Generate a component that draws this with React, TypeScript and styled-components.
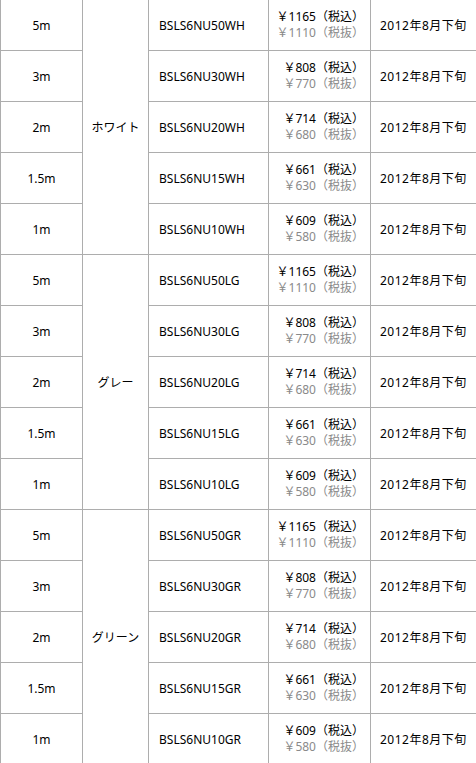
import React from 'react';
import { createGlobalStyle, styled } from 'styled-components';

// =============================================================================
// Data
// =============================================================================

const LENGTHS = [
  { label: '5m', code: '50', tax: 1165, net: 1110 },
  { label: '3m', code: '30', tax: 808, net: 770 },
  { label: '2m', code: '20', tax: 714, net: 680 },
  { label: '1.5m', code: '15', tax: 661, net: 630 },
  { label: '1m', code: '10', tax: 609, net: 580 },
];

const COLORS = [
  { name: 'ホワイト', code: 'WH' },
  { name: 'グレー', code: 'LG' },
  { name: 'グリーン', code: 'GR' },
];

const RELEASE = '2012年8月下旬';

// =============================================================================
// Main Component
// =============================================================================

export default function App() {
  return (
    <>
      <GlobalStyle />
      <Grid>
        {COLORS.map((color) =>
          LENGTHS.map((len, i) => (
            <React.Fragment key={color.code + len.code}>
              <Cell $align="center">{len.label}</Cell>
              {i === 0 && (
                <ColorCell $align="center" $span={LENGTHS.length}>
                  {color.name}
                </ColorCell>
              )}
              <Cell $align="left">BSLS6NU{len.code + color.code}</Cell>
              <PriceCell $align="right">
                <Price>￥{len.tax}（税込）</Price>
                <Price $muted>￥{len.net}（税抜）</Price>
              </PriceCell>
              <DateCell $align="left">{RELEASE}</DateCell>
            </React.Fragment>
          )),
        )}
      </Grid>
    </>
  );
}

// =============================================================================
// Styled Components
// =============================================================================

const GlobalStyle = createGlobalStyle`
  html, body {
    margin: 0;
    padding: 0;
    background: #fff;
    overflow: hidden;
  }
  body {
    font-family: "Noto Sans", "Noto Sans CJK JP", sans-serif;
    font-size: 12px;
    color: #000;
  }
`;

const Grid = styled.div`
  display: grid;
  grid-template-columns: 81px 65px 119px 101px 106px;
  grid-auto-rows: 50px;
  gap: 1px;
  padding: 0 1px 1px 1px;
  width: max-content;
  background: #adadad;
`;

type Align = 'left' | 'center' | 'right';

const Cell = styled.div<{ $align: Align }>`
  display: flex;
  align-items: center;
  justify-content: ${({ $align }) =>
    $align === 'left' ? 'flex-start' : $align === 'right' ? 'flex-end' : 'center'};
  padding: 0 10px;
  background: #fff;
  white-space: nowrap;
`;

const ColorCell = styled(Cell)<{ $span: number }>`
  grid-column: 2;
  grid-row: span ${({ $span }) => $span};
  padding: 0 4px;
`;

const PriceCell = styled(Cell)`
  flex-direction: column;
  align-items: flex-end;
  justify-content: center;
  padding: 0 6px 0 4px;
`;

const Price = styled.div<{ $muted?: boolean }>`
  line-height: 16px;
  color: ${({ $muted }) => ($muted ? '#8a8a8a' : '#000')};
`;

const DateCell = styled(Cell)`
  letter-spacing: 0.5px;
  padding-left: 9px;
`;
